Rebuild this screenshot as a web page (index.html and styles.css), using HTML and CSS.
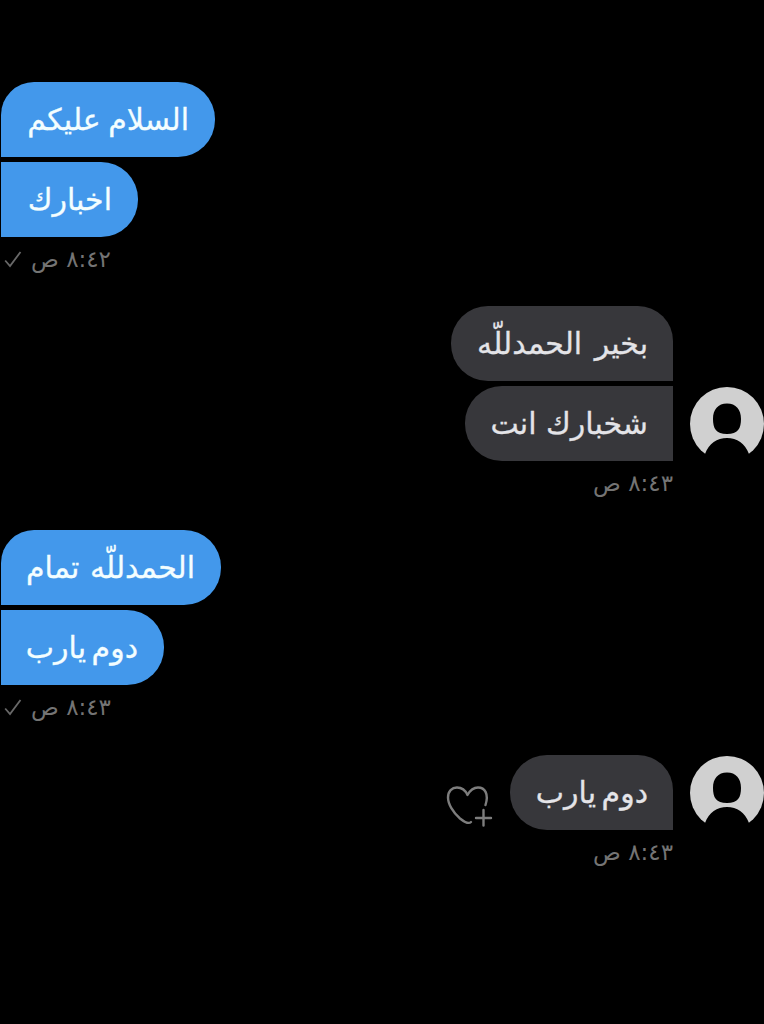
FILE: index.html
```
<!DOCTYPE html>
<html lang="ar" dir="rtl">
<head>
<meta charset="utf-8">
<title>محادثة</title>
<link rel="stylesheet" href="styles.css">
</head>
<body>
<main class="chat">
  <section class="group sent">
    <div class="bubble first hello"><span class="text">السلام عليكم</span></div>
    <div class="bubble news"><span class="text">اخبارك</span></div>
    <div class="meta"><span class="time">٨:٤٢ ص</span><svg class="check" viewBox="0 0 18 18"><path d="M1.200 10.500 6 16 16.500 2"/></svg></div>
  </section>
  <section class="group received">
    <div class="bubble first fine"><span class="text">بخير الحمدللّه</span></div>
    <div class="row">
      <svg class="avatar" viewBox="0 0 74 74"><circle cx="37" cy="37" r="37" fill="#d0d0d0"/><path fill="#000" d="M37 16.500c9 0 14 6 14 15.500s-3 15-14 15-14-5.500-14-15 5-15.500 14-15.500ZM15 67C19 56.500 27 51 37 51s18 5.500 22 16L61 75H13Z"/></svg>
      <div class="bubble you"><span class="text">شخبارك انت</span></div>
    </div>
    <div class="meta"><span class="time">٨:٤٣ ص</span></div>
  </section>
  <section class="group sent">
    <div class="bubble first good"><span class="text">الحمدللّه تمام</span></div>
    <div class="bubble always"><span class="text">دوم يارب</span></div>
    <div class="meta"><span class="time">٨:٤٣ ص</span><svg class="check" viewBox="0 0 18 18"><path d="M1.200 10.500 6 16 16.500 2"/></svg></div>
  </section>
  <section class="group received last">
    <div class="row">
      <svg class="avatar" viewBox="0 0 74 74"><circle cx="37" cy="37" r="37" fill="#d0d0d0"/><path fill="#000" d="M37 16.500c9 0 14 6 14 15.500s-3 15-14 15-14-5.500-14-15 5-15.500 14-15.500ZM15 67C19 56.500 27 51 37 51s18 5.500 22 16L61 75H13Z"/></svg>
      <div class="bubble first always"><span class="text">دوم يارب</span></div>
      <svg class="react" viewBox="0 0 48 42"><path d="M26 37C23.500 39.500 20 37.500 15 33.500C8 27.500 3 19 3 12.500C3 6 7 2.500 12 2.500C17 2.500 20.500 5.500 22.500 10C25 5.500 28.500 2.500 33 2.500C40 2.500 44 9 40.500 20M38.500 25v15.500M31 33h15"/></svg>
    </div>
    <div class="meta"><span class="time">٨:٤٣ ص</span></div>
  </section>
</main>
</body>
</html>
```
FILE: styles.css
```
body { margin: 0; background: #000; }
.chat { height: 1024px; box-sizing: border-box; padding: 82px 0 0 1px; font-family: "DejaVu Sans", sans-serif; font-size: 30px; color: #f4feff; }
.group { display: flex; flex-direction: column; align-items: flex-end; gap: 5px; }
.received { align-items: flex-start; color: #e4e4e8; }
.last { padding-top: 1px; }
.text { -webkit-text-stroke: 0.3px currentColor; }
.bubble { box-sizing: border-box; height: 75px; padding: 0 26px; background: #4398eb; display: flex; align-items: center; white-space: nowrap; border-radius: 0 37px 37px 0; }
.bubble.first { border-radius: 33px 37px 37px 0; }
.received .bubble { background: #37373b; padding: 0 25px; border-radius: 37px 0 0 37px; }
.received .bubble.first { border-radius: 37px 35px 0 37px; }
.received > .bubble { margin-right: 91px; }
.hello { width: 214px; word-spacing: -2px; }
.news { width: 137px; }
.fine { width: 222px; word-spacing: 3px; }
.you { width: 208px; }
.good { width: 220px; word-spacing: 1px; }
.always { width: 163px; word-spacing: -4px; }
.row { display: flex; gap: 17px; }
.avatar { width: 74px; height: 74px; margin-top: 1px; }
.meta { height: 64px; box-sizing: border-box; padding-top: 3px; display: flex; gap: 9px; font-size: 23px; line-height: 28px; color: #747474; }
.sent .meta { padding-left: 3px; }
.received .meta { padding-right: 91px; }
.check { width: 18px; height: 18px; margin-top: 5px; fill: none; stroke: #686868; stroke-width: 1.8; }
.react { width: 48px; height: 42px; margin-top: 30px; fill: none; stroke: #7d7d7d; stroke-width: 2.4; stroke-linecap: round; stroke-linejoin: round; }
```
